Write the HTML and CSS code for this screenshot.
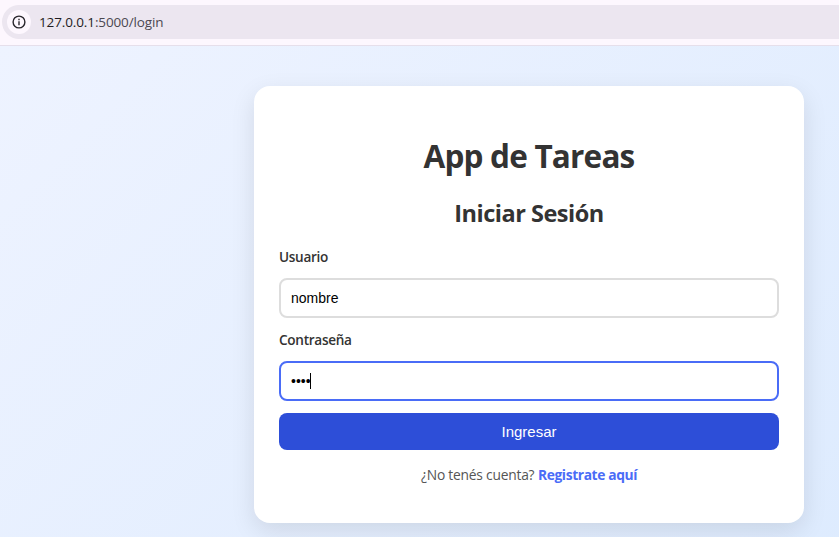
FILE: index.html
```html
<!DOCTYPE html>
<html lang="es">
<head>
<meta charset="utf-8">
<title>App de Tareas</title>
<link rel="stylesheet" href="styles.css">
</head>
<body>
<header class="toolbar">
  <div class="address">
    <span class="info">
      <svg width="14" height="14" viewBox="0 0 14 14" fill="none" stroke="#28262c" stroke-width="1.4"><circle cx="7" cy="7" r="5.9"/><path d="M7 6.3v4M7 3.7v1.5"/></svg>
    </span>
    <span class="url"><b>127.0.0.1</b>:5000/login</span>
  </div>
</header>
<main class="page">
  <section class="card">
    <h1>App de Tareas</h1>
    <h2>Iniciar Sesión</h2>
    <form>
      <div class="label">Usuario</div>
      <div class="field">nombre</div>
      <div class="label">Contraseña</div>
      <div class="field focused">••••<i class="caret"></i></div>
      <button type="button">Ingresar</button>
    </form>
    <p><span class="question">¿No tenés cuenta?</span> <a>Registrate aquí</a></p>
  </section>
</main>
</body>
</html>
```
FILE: styles.css
```css
* { box-sizing: border-box; }
body {
  margin: 0;
  height: 537px;
  overflow: hidden;
  font-family: "Open Sans", "Noto Sans", sans-serif;
  color: #333;
}
.toolbar {
  height: 46px;
  padding-top: 5px;
  background: #fdf7fe;
  border-bottom: 1px solid #e6dfeb;
}
.address {
  display: flex;
  align-items: center;
  height: 34px;
  margin-left: 2px;
  padding-left: 5px;
  background: #ece6f0;
  border-radius: 17px 0 0 17px;
}
.info {
  display: flex;
  align-items: center;
  justify-content: center;
  width: 24px;
  height: 24px;
  border-radius: 50%;
  background: #fdf7fe;
}
.url {
  margin-left: 8px;
  font-size: 13.5px;
  letter-spacing: -0.12px;
  color: #4b4850;
}
.url b { font-weight: 400; color: #1f1d22; }
.page {
  height: 491px;
  padding: 40px 35px 0 254px;
  background: linear-gradient(135deg, #eef3ff, #dbeafe) 0 0 / 1058px 491px no-repeat;
}
.card {
  height: 437px;
  padding: 48px 25px 0;
  border-radius: 16px;
  background: #fff;
  box-shadow: 0 8px 24px rgba(0, 0, 0, .1);
}
h1, h2, p { margin: 0; text-align: center; }
h1 { font-size: 31.5px; line-height: 44px; letter-spacing: -0.8px; }
h2 { margin-top: 19px; font-size: 23.5px; line-height: 32px; letter-spacing: -0.5px; }
.label {
  height: 20px;
  margin: 18px 0 11px;
  font-size: 13.6px;
  font-weight: 600;
  line-height: 20px;
  letter-spacing: -0.3px;
}
.field + .label { margin-top: 12px; }
.field {
  display: flex;
  align-items: center;
  height: 40px;
  padding: 0 10px;
  border: 2px solid #ddd;
  border-radius: 8px;
  font: 14px "Liberation Sans", Arial, sans-serif;
  color: #000;
}
.focused { border-color: #4a6cf7; }
.caret { width: 1px; height: 16px; margin-left: -1px; background: #000; }
button {
  display: block;
  width: 100%;
  height: 37px;
  margin-top: 12px;
  padding: 0;
  border: 0;
  border-radius: 8px;
  background: #2d4ed8;
  color: #fff;
  font: 15px "Liberation Sans", Arial, sans-serif;
}
p { margin-top: 15px; font-size: 13.8px; line-height: 20px; color: #555; }
.question { letter-spacing: -0.22px; }
a { color: #4a6cf7; font-weight: 700; letter-spacing: -0.38px; }
```
